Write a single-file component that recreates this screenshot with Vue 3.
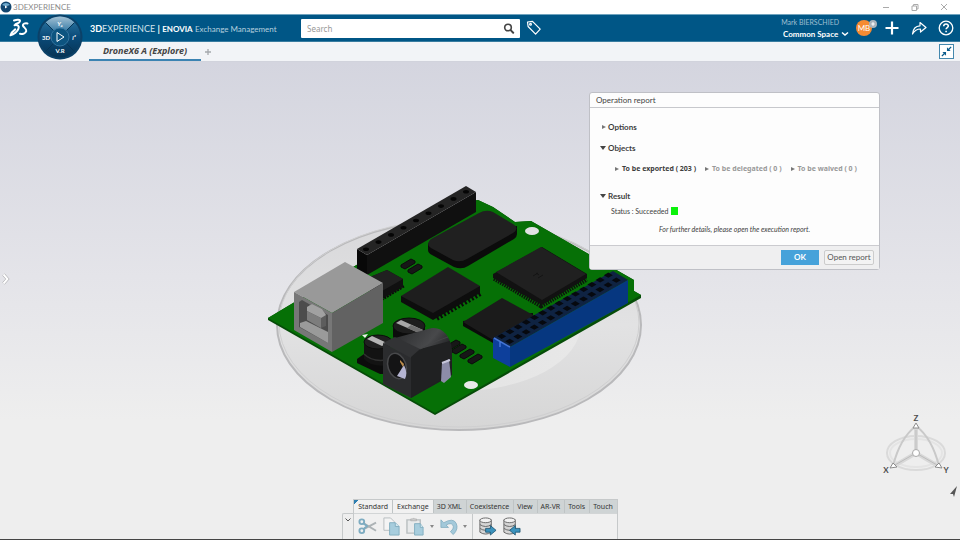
<template>
  <div class="app">
    <div class="titlebar">
      <svg class="title-logo" viewBox="0 0 12 12">
        <circle cx="6" cy="6" r="5.5" fill="#12466f" />
        <path d="M2 4a5 5 0 0 1 8 0L7 5H5z" fill="#6fa9cc" />
        <path d="M5 4.5v3l2.500-1.500z" fill="#fff" />
      </svg>
      <span class="title-text">3DEXPERIENCE</span>
      <div class="window-buttons">
        <button aria-label="Minimize"><svg viewBox="0 0 10 10"><path d="M2 5.500h6" /></svg></button>
        <button aria-label="Restore"><svg viewBox="0 0 10 10"><path d="M2 4h4.500v4.500H2zM3.500 4V2.500H8V7H6.500" /></svg></button>
        <button aria-label="Close"><svg viewBox="0 0 10 10"><path d="M2 2l6 6M8 2L2 8" /></svg></button>
      </div>
    </div>

    <header class="topbar">
      <div class="brand">
        <svg class="ds-logo" viewBox="0 0 22 20">
          <path d="M5 2.500c3-1 6-1 6 .3 0 1.400-2.200 2.700-4.500 3.400" />
          <path d="M5.500 7.200c3.500-.6 5 .8 4 3.400C8.400 13.500 5 16.800 1.500 17.300c.8-2.300 2.600-4.300 4.700-5.900" />
          <path d="M18.500 5.500c-2.500-.5-4.900.3-4.600 2 .3 1.900 4 3 3.400 5.600-.6 2.300-3.700 3.200-6.300 2.700" />
        </svg>
        <div class="brand-title">
          <b>3D</b>EXPERIENCE <b class="bar">|</b> <b class="enovia">ENOVIA</b> <span class="app-name">Exchange Management</span>
        </div>
      </div>
      <div class="search">
        <input type="text" placeholder="Search" aria-label="Search" />
        <button class="icon-btn search-btn" aria-label="Run search">
          <svg viewBox="0 0 12 12"><circle cx="5" cy="5.500" r="3.300" fill="none" stroke="#444" stroke-width="1.600" /><path d="M7.600 8.100l2.600 2.600" stroke="#444" stroke-width="2" stroke-linecap="round" /></svg>
        </button>
      </div>
      <button class="icon-btn tag-btn" aria-label="Tags">
        <svg viewBox="0 0 16 16" fill="none" stroke="#fff" stroke-width="1.200" stroke-linejoin="round"><path d="M1.500 2l5-.7 7.700 7.900-4.600 4.900-7.500-7.600z" /><circle cx="4.500" cy="4.200" r=".9" /></svg>
      </button>
      <div class="account">
        <span class="user-name">Mark BIERSCHIED</span>
        <label class="space">
          <select aria-label="Collaborative space"><option>Common Space</option></select>
          <svg viewBox="0 0 8 6"><path d="M1 1.500l3 2.500 3-2.500" fill="none" stroke="#fff" stroke-width="1.500" /></svg>
        </label>
      </div>
      <button class="icon-btn avatar" aria-label="My profile">
        <span class="initials">MB</span>
        <svg class="presence" viewBox="0 0 8 8"><circle cx="4" cy="4" r="4" fill="#a9b4bc" /><path d="M4 2.300v3.400M2.300 4h3.400" stroke="#fff" stroke-width="1.200" /></svg>
      </button>
      <div class="actions">
        <button class="icon-btn" aria-label="Add"><svg viewBox="0 0 16 16"><path d="M8 1.500v13M1.500 8h13" stroke="#fff" stroke-width="2.200" /></svg></button>
        <button class="icon-btn" aria-label="Share"><svg viewBox="0 0 16 16"><path d="M1.500 14C2 9 4.500 6 9 5.800V2.500L15 7.500 9.500 12V9C6 9 3.500 10.500 1.500 14z" fill="none" stroke="#fff" stroke-width="1.200" stroke-linejoin="round" /></svg></button>
        <button class="icon-btn" aria-label="Help"><svg viewBox="0 0 16 16" fill="none" stroke="#fff"><circle cx="8" cy="8" r="6.800" stroke-width="1.300" /><path d="M5.700 6.200c.2-3 4.700-2.800 4.600-.2 0 1.500-2.200 1.600-2.200 3.300M8.100 10.700v1.500" stroke-width="1.600" /></svg></button>
      </div>
      <svg class="compass" viewBox="0 0 46 46">
        <defs>
          <linearGradient id="compassRing" x1="0" y1="0" x2="0" y2="1">
            <stop offset="0" stop-color="#2f7aa6" /><stop offset=".5" stop-color="#0a4a78" /><stop offset="1" stop-color="#063354" />
          </linearGradient>
          <linearGradient id="compassNorth" x1="0" y1="0" x2="0" y2="1">
            <stop offset="0" stop-color="#a3c1d4" /><stop offset="1" stop-color="#3c7ea8" />
          </linearGradient>
        </defs>
        <circle cx="23" cy="23" r="22.500" fill="#0b4168" />
        <circle cx="23" cy="23" r="20.500" fill="url(#compassRing)" />
        <path d="M8.500 8.500a20.500 20.500 0 0 1 29 0L29.400 16.600a9 9 0 0 0-12.800 0z" fill="url(#compassNorth)" />
        <path d="M8.500 8.500l29 29M37.500 8.500l-29 29" stroke="#073657" stroke-width="1" />
        <circle cx="23" cy="23" r="9" fill="#0d5480" stroke="#3d7fa9" stroke-width=".8" />
        <path d="M20 18.500v9l7-4.500z" fill="none" stroke="#fff" stroke-width="1" />
        <text x="23" y="11.500" font-style="italic">Y₆</text>
        <text x="9" y="25.500">3D</text>
        <text x="37" y="25.500" font-style="italic">i²</text>
        <text x="23" y="39">V.R</text>
      </svg>
    </header>

    <nav class="tabs">
      <button class="tab">DroneX6 A (Explore)</button>
      <button class="new-tab" aria-label="New tab"><svg viewBox="0 0 8 8"><path d="M4 1v6M1 4h6" stroke="#a5a9ad" stroke-width="1.300" /></svg></button>
      <button class="shrink" aria-label="Exit full screen">
        <svg viewBox="0 0 14 14"><path d="M7.500 6.500V2.500l1.500 1.500 2.500-2.500 1 1L10 5l1.500 1.500zM6.500 7.500v4L5 10l-2.500 2.500-1-1L4 9 2.500 7.500z" fill="#0b5c8c" /></svg>
      </button>
    </nav>

    <main class="workspace">
      <svg class="scene" viewBox="0 62 960 478" preserveAspectRatio="xMidYMid meet">
        <defs>
          <linearGradient id="disc" x1="0" y1="0" x2="0" y2="1">
            <stop offset="0" stop-color="#d8d8da" /><stop offset=".5" stop-color="#e2e2e3" /><stop offset="1" stop-color="#d6d6d6" />
          </linearGradient>
          <linearGradient id="inner" x1="0" y1="0" x2="1" y2="0">
            <stop offset="0" stop-color="#dfdfdf" /><stop offset="1" stop-color="#e8e8e8" />
          </linearGradient>
          <linearGradient id="barrel" x1="0" y1="0" x2="1" y2="1">
            <stop offset="0" stop-color="#292a2c" /><stop offset=".4" stop-color="#48494b" /><stop offset=".6" stop-color="#232426" /><stop offset="1" stop-color="#18191a" />
          </linearGradient>
        </defs>

        <!-- transparent drone body -->
        <ellipse cx="459" cy="325" rx="182" ry="105" fill="url(#disc)" stroke="#b9b9bb" stroke-width="2" />
        <ellipse cx="459" cy="323" rx="180" ry="104" fill="none" stroke="#cfcfd0" stroke-width="1" />
        <ellipse cx="459" cy="324" rx="122" ry="67" fill="url(#inner)" />

        <!-- board -->
        <path d="M268 318L460 203l18-3 15 7 22 15 16-1 103 59v11l7 4v3L435 415 268 320z" fill="#064c08" />
        <path d="M268 318L460 203l18-3 15 7 22 15 16-1 103 59v11l7 4L435 413z" fill="#067006" />
        <ellipse cx="532" cy="231" rx="7" ry="4" fill="#e1e1e3" />
        <ellipse cx="471" cy="385" rx="7" ry="4" fill="#e9e9e9" />

        <!-- black pin header -->
        <path d="M357 249l10 6v20l-10-6z" fill="#080808" />
        <path d="M367 255l109-63v20l-109 63z" fill="#101010" />
        <path d="M357 249l109-63 10 6-109 63z" fill="#242424" />
        <ellipse v-for="n in 9" :key="'h' + n" :cx="353.500 + n * 12.500" :cy="256.500 - n * 7.200" rx="3" ry="1.800" fill="#050505" />

        <!-- oscillator -->
        <path d="M428 243v7q0 3 4 5l22 12q8 3 14-1l46-27q3-2 3-5v-8z" fill="#0b0b0b" />
        <path d="M479 213q7-4 14-1l20 12q7 4 0 9l-46 26q-7 4-14 1l-22-12q-6-4 0-9z" fill="#202020" />

        <path v-for="c in smallParts" :key="c.x + '-' + c.y" :d="partPath(c)" fill="#171717" stroke="#0b0b0b" stroke-width="1" />

        <!-- small chip behind the USB socket -->
        <path d="M380 297l23-14" stroke="#0a0a0a" stroke-width="9" stroke-dasharray="2 1" />
        <path d="M370 277l17-7 16 9v8l-21 12-12-6z" fill="#101010" />
        <path d="M370 277l17-7 16 9-21 12z" fill="#202020" />

        <!-- controller chip -->
        <path d="M436 317l44-25" stroke="#0a0a0a" stroke-width="8" stroke-dasharray="2 2" />
        <path d="M401 296v6l32 18 47-27v-7z" fill="#0d0d0d" />
        <path d="M448 267l32 19-47 27-32-17z" fill="#1e1e1e" />

        <path d="M463 321v5l30 17 40-24v-6z" fill="#0b0b0b" />
        <path d="M502 298l33 18-42 24-30-18z" fill="#1b1b1b" />

        <!-- processor -->
        <path d="M495 277l46 27 45-26" fill="none" stroke="#0c140c" stroke-width="8" stroke-dasharray="1.500 1" />
        <path d="M493 274l49-27 45 27v4l-45 27-49-27z" fill="#111" />
        <path d="M496 272l45-25 45 27-44 26z" fill="#202020" />
        <path d="M533 276l5-3M538 278l5-3M536 273l3 2" stroke="#141414" />

        <!-- blue connector -->
        <path d="M493 338l120-67 15 9-118 67z" fill="#0f2342" />
        <path d="M493 338l17 9v20l-17-9z" fill="#0d3f9b" />
        <path d="M510 347l118-67v23l-118 64z" fill="#063780" />
        <g fill="#06090f">
          <path v-for="n in 14" :key="'a' + n" :d="`M${489 + n * 8.200} ${341 - n * 4.700}l4.500-2.600 4.500 2.600-4.500 2.600z`" />
          <path v-for="n in 14" :key="'b' + n" :d="`M${497 + n * 8.200} ${346 - n * 4.700}l4.500-2.600 4.500 2.600-4.500 2.600z`" />
        </g>
        <path d="M494 338l16 9M500 341v6" fill="none" stroke="#4474d6" stroke-width="1.500" />

        <!-- USB socket -->
        <path d="M294 292l51-30 38 21-51 30z" fill="#999" />
        <path d="M332 313l51-30v40l-51 29z" fill="#626262" />
        <path d="M294 292l38 21v39l-38-22z" fill="#777" />
        <path d="M299 302l3-2 26 15v28l-29-16z" fill="#4c4c4c" />
        <path d="M300 323l6-2 22 11v11l-28-16z" fill="#9a9a9a" />
        <path d="M307 307l5-3 10 5 4 6v11l-5 2-14-8z" fill="#5d5d5d" />
        <path d="M307 307l5-3 10 5 4 6-5 3-14-7z" fill="#a1a1a1" />
        <path d="M307 311l14 7v10l-14-8z" fill="#7d7d7d" />
        <path d="M362 335l6-1-3 4z" fill="#eee" />

        <!-- capacitors -->
        <path d="M393 326v11q6 9 24 7l8-5v-13z" fill="#0c0c0c" />
        <ellipse cx="409" cy="326" rx="16" ry="8" fill="#1d1d1d" stroke="#0c0c0c" />
        <path d="M396 323l5-3 22 10-4 3z" fill="#a9a9a9" />
        <path d="M407 328l4-3 12 5-4 3z" fill="#6f6f6f" />
        <path d="M357 359l7-5 26 12v8h-10l-23-11z" fill="#0c0c0c" />
        <path d="M364 342v17q8 9 26 6v-23z" fill="#131313" />
        <ellipse cx="378" cy="342" rx="14" ry="7" fill="#202020" stroke="#0c0c0c" />
        <path d="M367 339l5-3 15 7-5 3z" fill="#b5b5b5" />
        <path d="M364 354q8 8 22 6" fill="none" stroke="#303030" stroke-width="1.500" />

        <!-- power jack -->
        <path d="M395 338l37-10q8-1 14 6 7 9 6 24v17l-41 23z" fill="url(#barrel)" />
        <path d="M383 343l12-6 25 12-9 10z" fill="#323335" />
        <path d="M411 357l9-8 30-8 1 32-40 25z" fill="#202122" />
        <path d="M420 349q18-9 28-12" fill="none" stroke="#434446" stroke-width="1" />
        <path d="M383 343l28 15v40l-28-14z" fill="#2b2c2e" />
        <ellipse cx="397" cy="366" rx="9" ry="13" transform="rotate(-18 397 366)" fill="#141415" stroke="#48494b" stroke-width="1.500" />
        <path d="M397 376l7-11q4 8 1 14z" fill="#b5b5d2" />
        <path d="M400 360l4 4-1 3-3-5z" fill="#bd8d4c" />
        <path d="M442 363l7-4 2 18-7 6-3-2z" fill="#8c8ca8" />
        <path d="M442 363l8-3" stroke="#c7c7da" stroke-width="2" />
      </svg>

      <button class="drawer" aria-label="Open panel"><svg viewBox="0 0 8 12"><path d="M1.500 1.500L5.500 6l-4 4.500" fill="none" stroke="#a3a3a7" stroke-width="3" /><path d="M1.500 1.500L5.500 6l-4 4.500" fill="none" stroke="#fff" stroke-width="2" /></svg></button>

      <section class="dialog" role="dialog" aria-labelledby="dlg-title">
        <h2 id="dlg-title">Operation report</h2>
        <div class="dialog-body">
          <button class="twisty closed">Options</button>
          <button class="twisty open">Objects</button>
          <div class="groups">
            <button v-for="g in groups" :key="g.name" class="twisty closed" :class="{ empty: g.count === 0 }">{{ g.name }} ( {{ g.count }} )</button>
          </div>
          <button class="twisty open">Result</button>
          <p class="status">Status : Succeeded <span class="ok-flag"></span></p>
          <p class="hint">For further details, please open the execution report.</p>
        </div>
        <footer>
          <button class="primary">OK</button>
          <button class="secondary">Open report</button>
        </footer>
      </section>

      <svg class="robot" viewBox="0 0 80 90">
        <g fill="none" stroke="#dadada" stroke-width="2">
          <ellipse cx="36" cy="43" rx="29" ry="17" />
          <ellipse cx="36" cy="43" rx="26" ry="14" stroke="#e4e4e4" />
          <path d="M36 16Q20 28 13 56M36 16Q52 28 59 56" stroke="#c9c9c9" />
        </g>
        <path d="M36 18v25L14 56M36 43l22 13" fill="none" stroke="#d8d8d8" stroke-width="4" />
        <path d="M36 20v23L15 55M36 43l21 12" fill="none" stroke="#bdbdbd" stroke-width="1" />
        <g fill="#fff" stroke="#8c8c8c" stroke-width="1">
          <path d="M36 13l-3 5h6zM10 58l3-5 4 4zM62 58l-3-5-4 4z" />
          <circle cx="36" cy="43" r="3.500" stroke="#aaa" />
        </g>
        <text x="36" y="11">Z</text><text x="6" y="63">X</text><text x="66" y="63">Y</text>
        <path d="M77 76l-7 8h3l1 3z" fill="#555" />
      </svg>

      <div class="action-bar">
        <button class="collapse" aria-label="Collapse action bar"><svg viewBox="0 0 8 6"><path d="M1.500 1.500L4 4l2.500-2.500" fill="none" stroke="#555" /></svg></button>
        <div class="bar-main">
          <div class="bar-tabs">
            <button v-for="(t, i) in barTabs" :key="t" :class="{ light: i < 2 }">{{ t }}</button>
          </div>
          <div class="bar-tools">
            <button aria-label="Cut">
              <svg viewBox="0 0 20 20"><path d="M6.500 12.500L19 6M6.500 7L19 14.500" stroke="#adb3b6" stroke-width="2" /><circle cx="4" cy="5" r="2.500" fill="none" stroke="#7eacc1" stroke-width="2" /><circle cx="4" cy="14.500" r="2.500" fill="none" stroke="#7eacc1" stroke-width="2" /><path d="M5.500 6.500l4 3-4 3.500" fill="none" stroke="#7eacc1" stroke-width="2" /></svg>
            </button>
            <button aria-label="Copy">
              <svg viewBox="0 0 20 20"><path d="M2 1h7l4 4v9H2z" fill="#f4f4f4" stroke="#b7bdc0" /><path d="M8 6h6l4 4v9H8z" fill="#a7cddd" stroke="#83afc1" /><path d="M14 6v4h4" fill="#d5e8f0" stroke="#83afc1" /></svg>
            </button>
            <button aria-label="Paste">
              <svg viewBox="0 0 20 20"><path d="M1 3h14v14H1z" fill="#e8eaeb" stroke="#b9bec0" stroke-width="1.500" /><path d="M5 4V2h2q1-2 2 0h2v2z" fill="#ccc" stroke="#aaa" stroke-width=".7" /><path d="M9 7h6l3 4v8H9z" fill="#a7cddd" stroke="#83afc1" /><path d="M15 7v4h3" fill="#d5e8f0" stroke="#83afc1" /></svg>
            </button>
            <button class="more" aria-label="Paste options"></button>
            <button aria-label="Undo">
              <svg viewBox="0 0 20 20"><path d="M2 3v8h8L7.500 8.500q5-3 7 0t-2.500 7l3 3q6-6 3-12T5 6z" fill="#a3c9da" stroke="#7faabd" stroke-width=".8" /></svg>
            </button>
            <button class="more" aria-label="Undo history"></button>
            <span class="divider"></span>
            <button v-for="d in transfers" :key="d.label" :aria-label="d.label">
              <svg viewBox="0 0 20 20">
                <path d="M2 3v13q6 4 12 0V3z" fill="#d5d5d5" stroke="#666" />
                <ellipse cx="8" cy="3.500" rx="6" ry="2.500" fill="#f2f2f2" stroke="#666" />
                <path d="M2 8q6 4 12 0M2 12q6 4 12 0" fill="none" stroke="#666" />
                <path :d="d.arrow" fill="#3c93bd" stroke="#174e6b" stroke-width=".8" />
              </svg>
            </button>
          </div>
        </div>
      </div>
    </main>
  </div>
</template>

<script setup>
import { ref } from 'vue'

const groups = ref([
  { name: 'To be exported', count: 203 },
  { name: 'To be delegated', count: 0 },
  { name: 'To be waived', count: 0 }
])

const barTabs = ['Standard', 'Exchange', '3D XML', 'Coexistence', 'View', 'AR-VR', 'Tools', 'Touch']

const transfers = [
  { label: 'Export', arrow: 'M8 12h5V9l6 5-6 5v-3H8z' },
  { label: 'Import', arrow: 'M19 12h-5V9l-6 5 6 5v-3h5z' }
]

// resistors on the board
const smallParts = [
  { x: 401, y: 265 },
  { x: 408, y: 270 },
  { x: 446, y: 346 },
  { x: 452, y: 350 },
  { x: 460, y: 355 },
  { x: 468, y: 360 }
]

const partPath = (c) => `M${c.x} ${c.y}l10-6 4 2v2l-10 6-4-2z`
</script>

<style>
body {
  margin: 0;
}
</style>

<style scoped>
.app {
  display: flex;
  flex-direction: column;
  min-height: 100vh;
  font-family: Lato, "Noto Sans", sans-serif;
  font-size: 8px;
  color: #3d3d3d;
  background: #fff;
}

button {
  font: inherit;
  color: inherit;
  border: 0;
  padding: 0;
  background: none;
  cursor: pointer;
}

svg {
  display: block;
}

.titlebar {
  display: flex;
  align-items: center;
  height: 14px;
  gap: 1px;
  color: #8c8c8c;
}

.title-logo {
  width: 12px;
  height: 12px;
}

.window-buttons {
  display: flex;
  gap: 19px;
  margin-left: auto;
  padding-right: 11px;
}

.window-buttons svg {
  width: 10px;
  height: 10px;
  fill: none;
  stroke: #aaa;
}

.topbar {
  position: relative;
  display: flex;
  align-items: center;
  height: 28px;
  box-sizing: border-box;
  color: #fff;
  background: #005686;
  border-top: 1px solid #6fa3be;
  border-bottom: 1px solid #397ca0;
}

.brand {
  display: flex;
  align-items: center;
  flex: 0 0 301px;
}

.ds-logo {
  width: 22px;
  height: 20px;
  margin: 0 59px 0 9px;
  fill: none;
  stroke: #fff;
  stroke-width: 2;
  stroke-linecap: round;
  stroke-linejoin: round;
}

.brand-title {
  font-size: 9px;
  color: #d3e2eb;
  white-space: nowrap;
}

.brand-title b {
  color: #fff;
}

.brand-title .enovia {
  font-size: 8px;
}

.app-name {
  font-size: 8px;
  color: #b5d0df;
}

.compass {
  position: absolute;
  left: 37px;
  top: -1px;
  width: 46px;
  height: 46px;
  z-index: 2;
}

.compass text {
  font-size: 6px;
  font-weight: bold;
  fill: #fff;
  text-anchor: middle;
}

.search {
  display: flex;
  align-items: center;
  flex: 0 1 219px;
  height: 19px;
  background: #fff;
  border-radius: 1px;
}

.search input {
  flex: 1;
  min-width: 0;
  height: 19px;
  box-sizing: border-box;
  padding: 0 6px;
  font: inherit;
  font-family: "Noto Sans", sans-serif;
  color: #444;
  border: 0;
  outline: 0;
  background: none;
}

.search input::placeholder {
  color: #999;
  opacity: 1;
}

.search-btn {
  margin-right: 5px;
}

.search-btn svg {
  width: 12px;
  height: 12px;
}

.tag-btn {
  margin-left: 6px;
}

.tag-btn svg,
.actions svg {
  width: 16px;
  height: 16px;
}

.account {
  display: flex;
  flex-direction: column;
  align-items: flex-end;
  margin-left: auto;
  line-height: 12px;
}

.user-name {
  margin-right: 10px;
  font-size: 7px;
  color: #9dbfd1;
}

.space {
  display: flex;
  align-items: center;
}

.space select {
  appearance: none;
  height: 12px;
  padding: 0;
  font: inherit;
  font-weight: bold;
  color: #fff;
  border: 0;
  background: none;
}

.space svg {
  width: 8px;
  height: 6px;
  margin-left: 2px;
}

.avatar {
  position: relative;
  margin-left: 7px;
}

.initials {
  display: block;
  width: 16px;
  height: 16px;
  border-radius: 50%;
  font-size: 8px;
  line-height: 16px;
  text-align: center;
  color: #fff;
  background: #f58b32;
}

.presence {
  position: absolute;
  top: 0;
  right: -5px;
  width: 8px;
  height: 8px;
}

.actions {
  display: flex;
  gap: 11px;
  margin: 0 6px 0 12px;
}

.tabs {
  display: flex;
  align-items: stretch;
  height: 20px;
  box-sizing: border-box;
  padding-left: 89px;
  background: #f2f4f7;
  border-bottom: 1px solid #d1d3dc;
}

.tab {
  width: 112px;
  font-family: "Noto Sans", sans-serif;
  font-size: 9px;
  font-weight: bold;
  font-style: italic;
  color: #444;
  border-bottom: 2px solid #3b83b2;
}

.new-tab {
  margin-left: 3px;
}

.new-tab svg {
  width: 8px;
  height: 8px;
}

.shrink {
  align-self: center;
  margin: 0 6px 0 auto;
  background: #fff;
  border: 1px solid #4488ae;
}

.shrink svg {
  width: 13px;
  height: 13px;
}

.workspace {
  position: relative;
  flex: 1;
  display: flex;
  align-items: flex-end;
  justify-content: center;
  min-height: 478px;
  box-sizing: border-box;
  border-bottom: 1px solid #444;
  background: linear-gradient(#d4d5df, #e4e4e9 45%, #eee 75%, #eee);
}

.scene {
  position: absolute;
  top: 0;
  left: 0;
  width: 100%;
}

.drawer {
  position: absolute;
  left: 2px;
  top: 211px;
}

.drawer svg {
  width: 8px;
  height: 12px;
}

.dialog {
  position: absolute;
  top: 30px;
  right: 80px;
  width: 289px;
  background: #fdfdfd;
  border: 1px solid #bfc0c6;
  border-radius: 3px;
}

.dialog h2 {
  margin: 0;
  padding: 0 6px;
  font-size: 8px;
  line-height: 14px;
  font-weight: normal;
  color: #444;
  border-bottom: 1px solid #c7c8cc;
}

.dialog-body {
  display: flex;
  flex-direction: column;
  align-items: flex-start;
  height: 137px;
  box-sizing: border-box;
  padding: 13px 10px 0;
}

.twisty {
  display: flex;
  align-items: center;
  gap: 2px;
  font-size: 8px;
  line-height: 12px;
  font-weight: bold;
  white-space: nowrap;
}

.twisty + .twisty {
  margin-top: 9px;
}

.twisty::before {
  content: "";
  border: 2px solid transparent;
}

.twisty.closed::before {
  margin-left: 2px;
  border-left: 4px solid #777;
  border-right: 0;
}

.twisty.open::before {
  border-width: 4px 3px 0;
  border-top-color: #444;
}

.groups {
  display: flex;
  gap: 7px;
  padding-left: 13px;
  margin: 9px 0 15px;
}

.groups .twisty {
  gap: 3px;
  margin: 0;
  font-family: "Noto Sans", sans-serif;
  font-size: 7px;
}

.twisty.empty {
  color: #999;
}

.status {
  display: flex;
  align-items: center;
  gap: 3px;
  margin: 3px 0 0 11px;
  font-size: 7px;
  line-height: 12px;
}

.ok-flag {
  width: 7px;
  height: 8px;
  background: #0bf20b;
}

.hint {
  align-self: center;
  margin: 6px 0 0;
  font-size: 7px;
  line-height: 12px;
  font-style: italic;
}

.dialog footer {
  display: flex;
  align-items: center;
  justify-content: flex-end;
  gap: 5px;
  padding: 4px 5px;
  background: #efeff0;
  border-top: 1px solid #cbcbcf;
}

.dialog footer button {
  height: 15px;
  font-size: 8px;
  line-height: 13px;
  white-space: nowrap;
}

.dialog footer .primary {
  width: 38px;
  font-weight: bold;
  color: #fff;
  background: #46a2da;
}

.dialog footer .secondary {
  width: 50px;
  color: #555;
  background: #f3f3f3;
  border: 1px solid #ccc;
  border-radius: 2px;
}

.robot {
  position: absolute;
  right: 0;
  bottom: 39px;
  width: 80px;
  height: 90px;
}

.robot text {
  font-size: 8px;
  font-weight: bold;
  fill: #4c4c4c;
  text-anchor: middle;
}

.action-bar {
  position: relative;
  display: flex;
  align-items: flex-end;
}

.collapse {
  display: flex;
  justify-content: center;
  width: 11px;
  height: 26px;
  padding-top: 3px;
  box-sizing: border-box;
  border: 1px solid #c6c9ca;
  border-width: 1px 0 0 1px;
  border-radius: 2px 0 0;
}

.collapse svg {
  width: 8px;
  height: 6px;
}

.bar-main {
  border: 1px solid #c6c9ca;
  border-bottom: 0;
}

.bar-tabs {
  display: flex;
  font-family: "Noto Sans", sans-serif;
  background: #cfd4d5;
}

.bar-tabs button {
  flex: auto;
  padding: 0 4px 0 3px;
  font-size: 7px;
  line-height: 13px;
  color: #333;
  border-right: 1px solid #bfc4c5;
}

.bar-tabs button:last-child {
  border-right: 0;
}

.bar-tabs .light {
  padding: 0 4px;
  background: #f1f1f1;
}

.bar-tabs button:first-child {
  background: linear-gradient(135deg, #2f7eb0 3px, #f1f1f1 3px);
}

.bar-tools {
  display: flex;
  align-items: center;
  height: 26px;
  box-sizing: border-box;
  padding-left: 4px;
  gap: 5px;
  border-top: 1px solid #d2d5d6;
  background: #f0f0f0;
}

.bar-tools svg {
  width: 19px;
  height: 19px;
}

.more::before {
  content: "";
  display: block;
  border: 2px solid transparent;
  border-top: 3px solid #888;
  border-bottom: 0;
}

.divider {
  align-self: stretch;
  border-left: 1px solid #c6c9ca;
}
</style>
